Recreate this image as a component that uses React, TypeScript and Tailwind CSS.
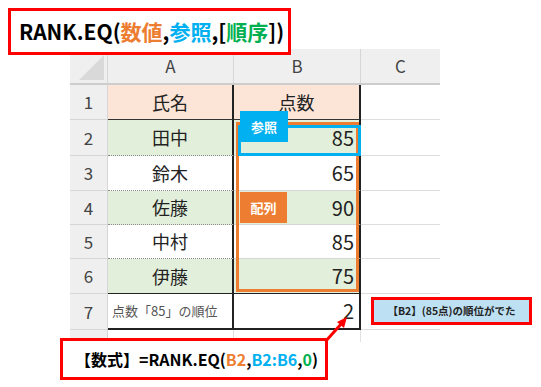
import React from "react";

const FONT = '"Noto Sans CJK JP", "Noto Sans", sans-serif';

type Row = { n: string; a: string; b: string; h: string; green: boolean };

const rows: Row[] = [
  { n: "2", a: "田中", b: "85", h: "h-[36px]", green: true },
  { n: "3", a: "鈴木", b: "65", h: "h-[35px]", green: false },
  { n: "4", a: "佐藤", b: "90", h: "h-[34px]", green: true },
  { n: "5", a: "中村", b: "85", h: "h-[34px]", green: false },
  { n: "6", a: "伊藤", b: "75", h: "h-[35px]", green: true },
];

function RowNum({ n, h }: { n: string; h: string }) {
  return (
    <div
      className={`w-[38px] ${h} shrink-0 bg-[#efefef] border-r border-b border-[#d6d6d6] flex items-center justify-center text-[17px] text-[#444]`}
    >
      {n}
    </div>
  );
}

function CellC({ h }: { h: string }) {
  return <div className={`w-[79px] ${h} shrink-0 bg-white border-b border-[#dedede]`} />;
}

export default function App() {
  return (
    <div
      className="relative w-[541px] h-[387px] bg-white overflow-hidden text-[#222]"
      style={{ fontFamily: FONT }}
    >
      <div className="pt-[49px] pl-[70px]">
        <div className="w-[370px]">
          {/* header */}
          <div className="flex h-[36px] bg-[#efefef] border-b-2 border-[#cdcdcd]">
            <div className="w-[38px] shrink-0 border-r border-[#d6d6d6] relative">
              <div className="absolute right-[3px] bottom-[3px] w-0 h-0 border-l-[25px] border-l-transparent border-b-[25px] border-b-[#d9d9d9]" />
            </div>
            <div className="w-[126px] shrink-0 border-r border-[#d6d6d6] flex items-center justify-center text-[17px] text-[#444]">
              A
            </div>
            <div className="w-[127px] shrink-0 border-r border-[#d6d6d6] flex items-center justify-center text-[17px] text-[#444]">
              B
            </div>
            <div className="w-[79px] shrink-0 flex items-center justify-center text-[17px] text-[#444]">
              C
            </div>
          </div>
          {/* row 1 */}
          <div className="flex">
            <RowNum n="1" h="h-[35px]" />
            <div className="w-[126px] h-[35px] shrink-0 bg-[#fce4d6] border-r-2 border-r-[#222] border-b border-b-[#333] flex items-center justify-center text-[18px]">
              氏名
            </div>
            <div className="w-[127px] h-[35px] shrink-0 bg-[#fce4d6] border-r-2 border-r-[#222] border-b border-b-[#333] flex items-center justify-center text-[18px]">
              点数
            </div>
            <CellC h="h-[35px]" />
          </div>
          {rows.map((r, i) => (
            <div className="flex" key={r.n}>
              <RowNum n={r.n} h={r.h} />
              <div
                className={`w-[126px] ${r.h} shrink-0 ${r.green ? "bg-[#e2efda]" : "bg-white"} border-r-2 border-r-[#222] border-b ${i === 4 ? "border-b-[#222]" : "[border-bottom-style:dotted] border-b-[#8a8a8a]"} flex items-center justify-center text-[18px]`}
              >
                {r.a}
              </div>
              <div
                className={`w-[127px] ${r.h} shrink-0 ${r.green ? "bg-[#e2efda]" : "bg-white"} border-r-2 border-r-[#222] border-b ${i === 4 ? "border-b-[#222]" : "border-b-[#d6d6d6]"} flex items-center justify-end pr-[5px] text-[20px]`}
              >
                {r.b}
              </div>
              <CellC h={r.h} />
            </div>
          ))}
          {/* row 7 */}
          <div className="flex">
            <RowNum n="7" h="h-[36px]" />
            <div className="w-[126px] h-[36px] shrink-0 bg-white border-r-2 border-r-[#222] border-b-2 border-b-[#222] flex items-center pl-[4px] text-[13px] text-[#555] whitespace-nowrap">
              点数「85」の順位
            </div>
            <div className="w-[127px] h-[36px] shrink-0 bg-white border-r-2 border-r-[#222] border-b-2 border-b-[#222] flex items-center justify-end pr-[5px] text-[20px]">
              2
            </div>
            <CellC h="h-[36px]" />
          </div>
          {/* row 8 partial */}
          <div className="flex">
            <div className="w-[38px] h-[12px] shrink-0 bg-[#efefef] border-r border-[#d6d6d6]" />
            <div className="w-[126px] h-[12px] shrink-0 border-r border-[#e0e0e0]" />
            <div className="w-[127px] h-[12px] shrink-0 border-r border-[#e0e0e0]" />
          </div>
        </div>
      </div>

      {/* orange range box */}
      <div className="absolute left-[236px] top-[122px] w-[123px] h-[170px] border-[3px] border-[#ed7d31]" />
      {/* blue reference box */}
      <div className="absolute left-[238px] top-[125px] w-[123px] h-[31px] border-[3px] border-[#00b0f0]" />
      {/* labels */}
      <div className="absolute left-[240px] top-[111px] w-[48px] h-[31px] bg-[#00b0f0] text-white font-bold text-[13px] flex items-center justify-center">
        参照
      </div>
      <div className="absolute left-[240px] top-[192px] w-[47px] h-[31px] bg-[#ed7d31] text-white font-bold text-[13px] flex items-center justify-center">
        配列
      </div>

      {/* title box */}
      <div className="absolute left-[8px] top-[8px] w-[283px] h-[47px] bg-white border-[3px] border-[#ff0000] flex items-center pl-[8px] text-[21px] font-bold text-black whitespace-nowrap">
        <span>RANK.EQ(</span>
        <span className="text-[#ed7d31]">数値</span>
        <span>,</span>
        <span className="text-[#00b0f0]">参照</span>
        <span>,[</span>
        <span className="text-[#00b050]">順序</span>
        <span>])</span>
      </div>

      {/* arrow */}
      <svg className="absolute left-[315px] top-[310px]" width="40" height="40" viewBox="0 0 40 40">
        <line x1="10" y1="32" x2="27" y2="13" stroke="#ff0000" strokeWidth="3" />
        <polygon points="32,7 22,12 29,18" fill="#ff0000" />
      </svg>

      {/* formula box */}
      <div className="absolute left-[60px] top-[338px] w-[268px] h-[42px] bg-white border-[3px] border-[#ff0000] flex items-center pl-[12px] text-[16px] font-bold text-black whitespace-nowrap">
        <span>【数式】=RANK.EQ(</span>
        <span className="text-[#ed7d31]">B2</span>
        <span>,</span>
        <span className="text-[#00b0f0]">B2:B6</span>
        <span>,</span>
        <span className="text-[#00b050]">0</span>
        <span>)</span>
      </div>

      {/* callout */}
      <div className="absolute left-[371px] top-[297px] w-[161px] h-[28px] bg-[#bde0f2] border-[3px] border-[#ff0000] flex items-center justify-center text-[10.5px] font-bold text-[#222] whitespace-nowrap">
        【B2】(85点)の順位がでた
      </div>
    </div>
  );
}
